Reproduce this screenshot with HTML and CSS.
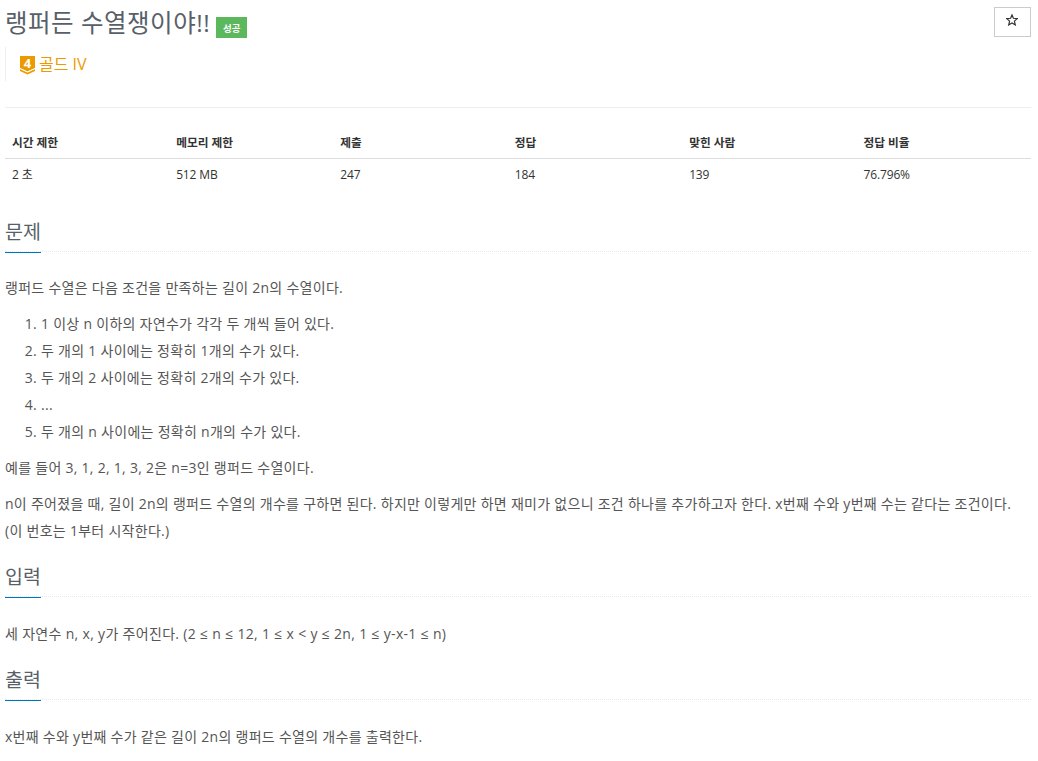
FILE: index.html
```
<!DOCTYPE html>
<html lang="ko">
<head>
  <meta charset="UTF-8">
  <title>랭퍼든 수열쟁이야!!</title>
  <link rel="stylesheet" href="styles.css">
</head>
<body>
  <div class="container">
    <div class="page-header">
      <div class="title-row">
        <h1 id="problem_title">랭퍼든 수열쟁이야!!</h1>
        <span class="label-success">성공</span>
        <button class="btn-favorite" aria-label="즐겨찾기">
          <svg width="12" height="12" viewBox="0 0 12 12"><path d="M6 .9 7.4 4.3 11.3 4.6 8.4 7.1 9.3 10.9 6 8.9 2.7 10.9 3.6 7.1 .7 4.6 4.6 4.3Z" fill="none" stroke="#333" stroke-width="1.2"/></svg>
        </button>
      </div>
      <blockquote class="tier">
        <svg class="tier-icon" width="15" height="19" viewBox="0 0 15 19">
          <path d="M0 0H15V12L7.5 15.5 0 12Z" fill="#ec9a00"/>
          <path d="M0 12.8 7.5 16.2 15 12.8V15L7.5 18.6 0 15Z" fill="#ec9a00"/>
          <path d="M0 12.6 7.5 16.1 15 12.6" fill="none" stroke="#fff" stroke-width="1"/>
          <text x="7.5" y="12" text-anchor="middle" class="tier-number">4</text>
        </svg>
        <span>골드 IV</span>
      </blockquote>
    </div>

    <table class="table" id="problem-info">
      <thead>
        <tr>
          <th class="col-16">시간 제한</th>
          <th class="col-16">메모리 제한</th>
          <th class="col-17">제출</th>
          <th class="col-17">정답</th>
          <th class="col-17">맞힌 사람</th>
          <th class="col-17">정답 비율</th>
        </tr>
      </thead>
      <tbody>
        <tr>
          <td>2 초</td>
          <td>512 MB</td>
          <td>247</td>
          <td>184</td>
          <td>139</td>
          <td>76.796%</td>
        </tr>
      </tbody>
    </table>

    <section class="problem-section" id="description">
      <div class="headline"><h2>문제</h2></div>
      <div class="problem-text">
        <p>랭퍼드 수열은 다음 조건을 만족하는 길이 2n의 수열이다.</p>
        <ol>
          <li>1 이상 n 이하의 자연수가 각각 두 개씩 들어 있다.</li>
          <li>두 개의 1 사이에는 정확히 1개의 수가 있다.</li>
          <li>두 개의 2 사이에는 정확히 2개의 수가 있다.</li>
          <li>...</li>
          <li>두 개의 n 사이에는 정확히 n개의 수가 있다.</li>
        </ol>
        <p>예를 들어 3, 1, 2, 1, 3, 2은 n=3인 랭퍼드 수열이다.</p>
        <p>n이 주어졌을 때, 길이 2n의 랭퍼드 수열의 개수를 구하면 된다. 하지만 이렇게만 하면 재미가 없으니 조건 하나를 추가하고자 한다. x번째 수와 y번째 수는 같다는 조건이다. (이 번호는 1부터 시작한다.)</p>
      </div>
    </section>

    <section class="problem-section" id="input">
      <div class="headline"><h2>입력</h2></div>
      <div class="problem-text">
        <p>세 자연수 n, x, y가 주어진다. (2 ≤ n ≤ 12, 1 ≤ x &lt; y ≤ 2n, 1 ≤ y-x-1 ≤ n)</p>
      </div>
    </section>

    <section class="problem-section" id="output">
      <div class="headline"><h2>출력</h2></div>
      <div class="problem-text">
        <p>x번째 수와 y번째 수가 같은 길이 2n의 랭퍼드 수열의 개수를 출력한다.</p>
      </div>
    </section>
  </div>
</body>
</html>
```
FILE: styles.css
```
* {
  box-sizing: border-box;
}

body {
  margin: 0;
  background: #fff;
  color: #333;
  font-family: "Open Sans", "Noto Sans CJK KR", sans-serif;
  font-size: 14px;
  overflow: hidden;
}

.container {
  padding: 7px 7px 0 5px;
}

.page-header {
  height: 101px;
  border-bottom: 1px solid #eee;
}

.title-row {
  display: flex;
  align-items: flex-start;
  height: 34px;
}

h1 {
  margin: 0;
  font-size: 24.5px;
  font-weight: 400;
  letter-spacing: 0.5px;
  line-height: 31px;
  color: #585f69;
  white-space: nowrap;
}

.label-success {
  margin: 10px 0 0 6px;
  width: 31px;
  height: 21px;
  background: #5cb85c;
  color: #fff;
  font-size: 9.5px;
  font-weight: 700;
  line-height: 23px;
  text-align: center;
}

.btn-favorite {
  display: flex;
  align-items: center;
  justify-content: center;
  margin-left: auto;
  width: 37px;
  height: 30px;
  padding: 0 1px 4px 0;
  background: #fff;
  border: 1px solid #ccc;
}

.tier {
  display: flex;
  align-items: center;
  gap: 4px;
  height: 34px;
  margin: 6px 0 0;
  padding-left: 14px;
  border-left: 1px solid #eee;
  color: #ec9a00;
  font-size: 16px;
  line-height: 24px;
}

.tier-icon {
  margin-top: 3px;
  overflow: visible;
}

.tier-number {
  fill: #fff;
  font-size: 13px;
  font-weight: 700;
}

.table {
  width: 100%;
  margin: 19px 0 27px;
  border-collapse: collapse;
  table-layout: fixed;
  font-size: 12px;
  line-height: 16px;
}

.table th,
.table td {
  height: 31px;
  padding: 8px 7px 7px;
  text-align: left;
  vertical-align: top;
}

.table th {
  padding: 7px 7px 8px;
  border-bottom: 1px solid #ddd;
  font-size: 11.7px;
}

.table td {
  letter-spacing: -0.15px;
}

.col-16 {
  width: 16%;
}

.col-17 {
  width: 17%;
}

.problem-section {
  padding-bottom: 18px;
}

.headline {
  height: 35px;
  border-bottom: 1px dotted #e4e9f0;
}

.headline h2 {
  display: inline-block;
  margin: 0;
  height: 36px;
  border-bottom: 1px solid #0076c0;
  color: #585f69;
  font-size: 19.5px;
  font-weight: 400;
  line-height: 30px;
}

.problem-text {
  padding-top: 23px;
  color: #555;
  letter-spacing: 0.28px;
  line-height: 27px;
}

.problem-text p,
.problem-text ol {
  margin: 0 0 9px;
}

.problem-text p:last-child {
  margin-bottom: 0;
}

.problem-text ol {
  padding-left: 36px;
}

#description .problem-text {
  padding-top: 22px;
}

#input .problem-text {
  letter-spacing: 0.32px;
}
```
